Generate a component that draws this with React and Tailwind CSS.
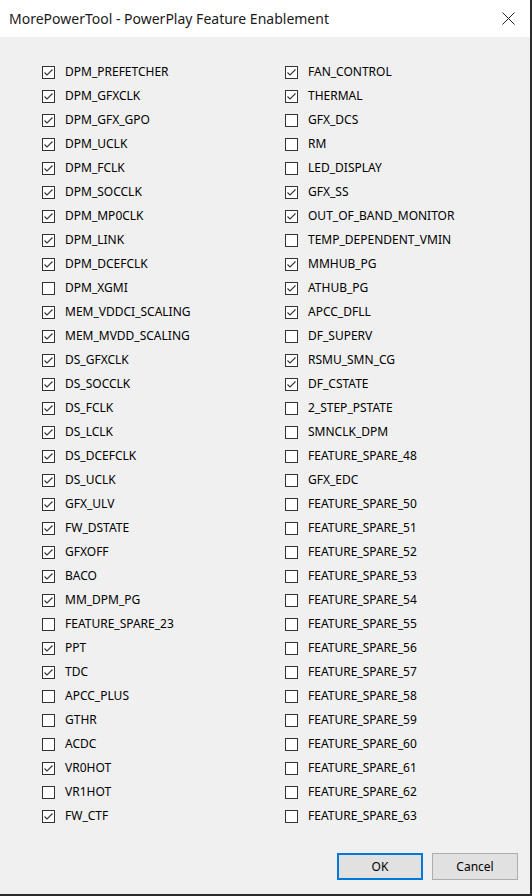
import React from "react";

const left = [
  ["DPM_PREFETCHER", 1], ["DPM_GFXCLK", 1], ["DPM_GFX_GPO", 1], ["DPM_UCLK", 1],
  ["DPM_FCLK", 1], ["DPM_SOCCLK", 1], ["DPM_MP0CLK", 1], ["DPM_LINK", 1],
  ["DPM_DCEFCLK", 1], ["DPM_XGMI", 0], ["MEM_VDDCI_SCALING", 1], ["MEM_MVDD_SCALING", 1],
  ["DS_GFXCLK", 1], ["DS_SOCCLK", 1], ["DS_FCLK", 1], ["DS_LCLK", 1],
  ["DS_DCEFCLK", 1], ["DS_UCLK", 1], ["GFX_ULV", 1], ["FW_DSTATE", 1],
  ["GFXOFF", 1], ["BACO", 1], ["MM_DPM_PG", 1], ["FEATURE_SPARE_23", 0],
  ["PPT", 1], ["TDC", 1], ["APCC_PLUS", 0], ["GTHR", 0],
  ["ACDC", 0], ["VR0HOT", 1], ["VR1HOT", 0], ["FW_CTF", 1],
];

const right = [
  ["FAN_CONTROL", 1], ["THERMAL", 1], ["GFX_DCS", 0], ["RM", 0],
  ["LED_DISPLAY", 0], ["GFX_SS", 1], ["OUT_OF_BAND_MONITOR", 1], ["TEMP_DEPENDENT_VMIN", 0],
  ["MMHUB_PG", 1], ["ATHUB_PG", 1], ["APCC_DFLL", 1], ["DF_SUPERV", 0],
  ["RSMU_SMN_CG", 1], ["DF_CSTATE", 1], ["2_STEP_PSTATE", 0], ["SMNCLK_DPM", 0],
  ["FEATURE_SPARE_48", 0], ["GFX_EDC", 0],
  ...Array.from({ length: 14 }, (_, i) => [`FEATURE_SPARE_${50 + i}`, 0]),
];

function Row({ label, checked }) {
  return (
    <div className="flex h-[24px] items-center">
      <div className="flex h-[13px] w-[13px] items-center justify-center border border-[#333333] bg-white">
        {checked ? (
          <svg width="11" height="11" viewBox="0 0 11 11">
            <path d="M1.5 5.5 L4 8 L9.5 2.5" fill="none" stroke="#333333" strokeWidth="1.1" />
          </svg>
        ) : null}
      </div>
      <span className="ml-[10px] text-[12px] leading-none text-black">{label}</span>
    </div>
  );
}

export default function App() {
  return (
    <div
      className="h-[896px] w-[532px] overflow-hidden bg-[#2b2b2b]"
      style={{ fontFamily: '"Segoe UI", "Noto Sans", "Open Sans", sans-serif' }}
    >
      <div className="flex h-[894px] w-[530px] flex-col bg-[#f0f0f0]">
        <div className="flex h-[37px] items-center justify-between bg-white pl-[9px] pr-[15px]">
          <span className="text-[14px] text-[#1a1a1a]">MorePowerTool - PowerPlay Feature Enablement</span>
          <svg width="13" height="13" viewBox="0 0 13 13">
            <path d="M0.5 0.5 L12.5 12.5 M12.5 0.5 L0.5 12.5" stroke="#222" strokeWidth="1" />
          </svg>
        </div>
        <div className="flex pl-[42px] pt-[23px]">
          <div className="flex w-[243px] flex-col">
            {left.map(([l, c]) => (
              <Row key={l} label={l} checked={c} />
            ))}
          </div>
          <div className="flex flex-col">
            {right.map(([l, c]) => (
              <Row key={l} label={l} checked={c} />
            ))}
          </div>
        </div>
        <div className="mt-[25px] flex gap-[9px] pl-[337px]">
          <button className="h-[27px] w-[86px] border-2 border-[#0078d7] bg-[#e1e1e1] text-[12px] text-black">
            OK
          </button>
          <button className="h-[27px] w-[86px] border border-[#adadad] bg-[#e1e1e1] text-[12px] text-black">
            Cancel
          </button>
        </div>
      </div>
    </div>
  );
}
